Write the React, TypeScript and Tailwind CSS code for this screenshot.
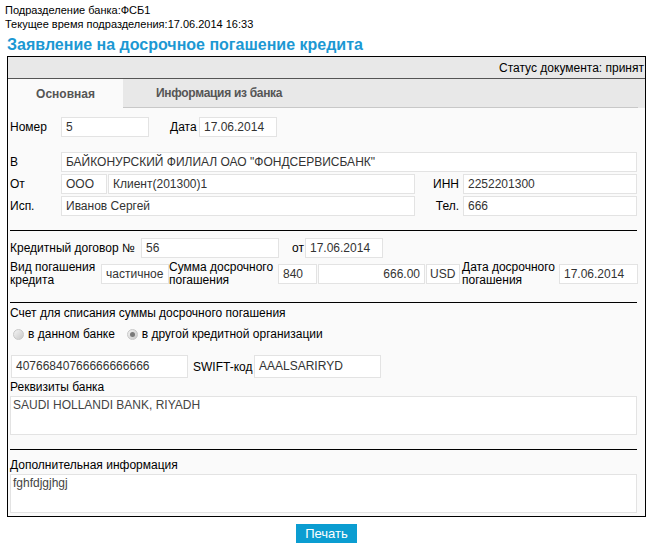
import React from "react";

const inp = "h-[20px] border border-[#e3e3e3] bg-white px-[4px] leading-[18px] text-[#333] whitespace-nowrap overflow-hidden";

function Field({ w, value, right }: { w: string; value: string; right?: boolean }) {
  return <div className={`${inp} ${w} ${right ? "text-right" : ""}`}>{value}</div>;
}

function Radio({ checked }: { checked?: boolean }) {
  return (
    <span className="inline-flex size-[11px] items-center justify-center rounded-full border border-[#c8c8c8] bg-gradient-to-br from-[#f4f4f4] to-[#c9c9c9]">
      {checked && <span className="size-[5px] rounded-full bg-[#7a7a7a]" />}
    </span>
  );
}

export default function App() {
  return (
    <div className="h-[545px] w-[653px] bg-white font-['Liberation_Sans',Arial,sans-serif] text-[12px] text-black">
      <div className="pl-[5px] pt-[3px] text-[11px] leading-[14px]">
        <div>Подразделение банка:ФСБ1</div>
        <div>Текущее время подразделения:17.06.2014 16:33</div>
      </div>
      <h1 className="ml-[7px] mt-[5px] text-[16px] font-bold leading-[18px] text-[#1c98d3]">
        Заявление на досрочное погашение кредита
      </h1>

      <div className="ml-[7px] mt-[2px] w-[639px] border border-black bg-[#fafafa]">
        {/* status */}
        <div className="flex h-[22px] items-center justify-end border-b border-[#555] bg-[#e8e8e8] pr-[1px] leading-none">
          Статус документа: принят
        </div>
        {/* tabs */}
        <div className="flex h-[29px] bg-[#e8e8e8] pr-[7px]">
          <div className="flex w-[115px] items-center justify-center bg-[#fafafa] font-bold text-[#555]">
            Основная
          </div>
          <div className="flex flex-1 border-b border-[#c8c8c8]">
            <div className="flex items-center whitespace-nowrap pl-[33px] font-bold tracking-[-0.3px] text-[#555]">
              Информация из банка
            </div>
          </div>
        </div>

        <div className="px-[2px] pt-[9px]">
          <div className="flex items-center">
            <span className="w-[51px]">Номер</span>
            <Field w="w-[88px]" value="5" />
            <span className="ml-[21px] w-[29px]">Дата</span>
            <Field w="w-[78px]" value="17.06.2014" />
          </div>

          <div className="mt-[15px] flex flex-col gap-[2px] pr-[6px]">
            <div className="flex items-center">
              <span className="w-[51px]">В</span>
              <Field w="flex-1" value={'БАЙКОНУРСКИЙ ФИЛИАЛ ОАО "ФОНДСЕРВИСБАНК"'} />
            </div>
            <div className="flex items-center">
              <span className="w-[51px]">От</span>
              <Field w="w-[46px]" value="ООО" />
              <Field w="ml-[1px] w-[307px]" value="Клиент(201300)1" />
              <span className="w-[48px] pr-[4px] text-right">ИНН</span>
              <Field w="flex-1" value="2252201300" />
            </div>
            <div className="flex items-center">
              <span className="w-[51px]">Исп.</span>
              <Field w="w-[354px]" value="Иванов Сергей" />
              <span className="w-[48px] pr-[4px] text-right">Тел.</span>
              <Field w="flex-1" value="666" />
            </div>
          </div>

          <div className="mt-[14px] mr-[6px] border-t border-black" />

          <div className="mt-[7px] flex items-center">
            <span className="w-[131px]">Кредитный договор №</span>
            <Field w="w-[138px]" value="56" />
            <span className="w-[25px] text-right">от</span>
            <Field w="ml-[1px] w-[78px]" value="17.06.2014" />
          </div>
          <div className="mt-[3px] flex items-center">
            <span className="w-[91px] leading-[13px]">Вид погашения кредита</span>
            <Field w="w-[68px]" value="частичное" />
            <span className="w-[109px] leading-[13px]">Сумма досрочного погашения</span>
            <Field w="w-[39px]" value="840" />
            <Field w="ml-[1px] w-[107px]" value="666.00" right />
            <Field w="ml-[1px] w-[34px] !px-[3px]" value="USD" />
            <span className="ml-[2px] w-[97px] leading-[13px]">Дата досрочного погашения</span>
            <Field w="w-[79px]" value="17.06.2014" />
          </div>

          <div className="mt-[15px] mr-[6px] border-t border-black" />

          <div className="mt-[3px] leading-[14px]">Счет для списания суммы досрочного погашения</div>
          <div className="mt-[7px] flex items-center gap-[4px] pl-[3px] leading-[14px]">
            <Radio />
            <span>в данном банке</span>
            <span className="ml-[4px]" />
            <Radio checked />
            <span>в другой кредитной организации</span>
          </div>

          <div className="mt-[14px] flex items-center">
            <Field w="ml-[1px] w-[177px] h-[23px] leading-[21px]" value="40766840766666666666" />
            <span className="w-[66px] pl-[5px]">SWIFT-код</span>
            <Field w="w-[127px] h-[23px] leading-[21px]" value="AAALSARIRYD" />
          </div>

          <div className="mt-[2px] leading-[14px]">Реквизиты банка</div>
          <div className="mt-[2px] mr-[6px] h-[39px] border border-[#e3e3e3] bg-white px-[2px] pt-[1px] leading-[14px] text-[#444]">
            SAUDI HOLLANDI BANK, RIYADH
          </div>

          <div className="mt-[14px] mr-[6px] border-t border-black" />

          <div className="mt-[8px] leading-[14px]">Дополнительная информация</div>
          <div className="mt-[2px] mr-[6px] mb-[3px] h-[39px] border border-[#e3e3e3] bg-white px-[2px] pt-[1px] leading-[14px] text-[#444]">
            fghfdjgjhgj
          </div>
        </div>
      </div>

      <div className="mt-[7px] flex justify-center">
        <button className="h-[19px] w-[61px] bg-[#0b9dd1] text-[13px] leading-[19px] text-white">
          Печать
        </button>
      </div>
    </div>
  );
}
